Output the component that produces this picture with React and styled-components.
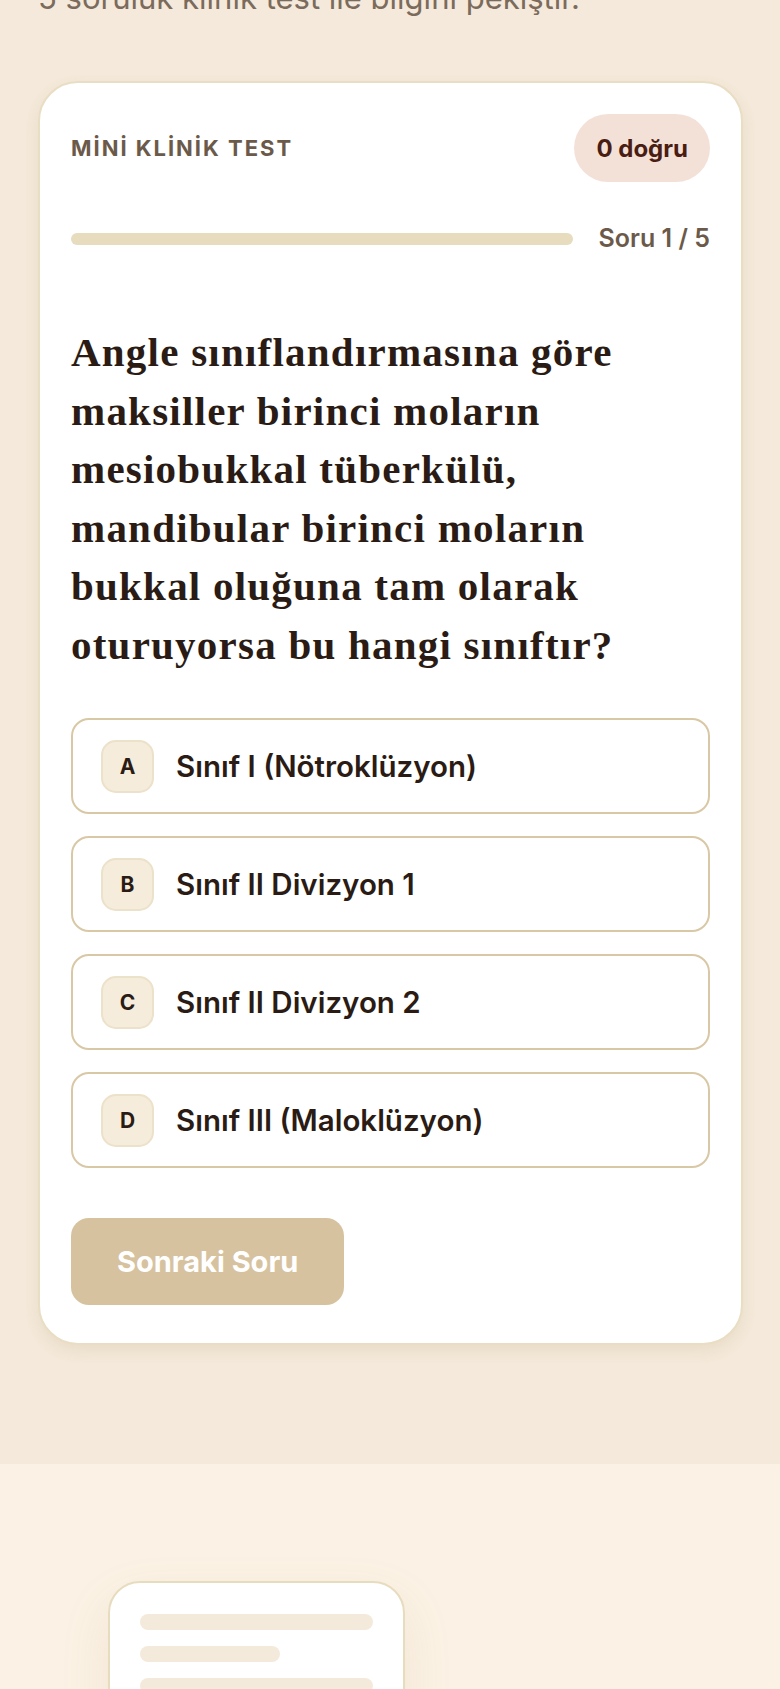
import React from "react";
import styled, { createGlobalStyle } from "styled-components";

const GlobalStyle = createGlobalStyle`
  html, body { margin: 0; padding: 0; }
  body {
    background: #f4e9da;
    font-family: Inter, "Noto Sans", sans-serif;
    -webkit-font-smoothing: antialiased;
  }
`;

const Page = styled.div`
  width: 780px;
  overflow: hidden;
`;

const TopSection = styled.section`
  background: #f4e9da;
  padding: 0 37px 119px 38px;
`;

const Subtitle = styled.p`
  margin: -25px 0 0;
  font-size: 31px;
  line-height: 46px;
  color: #7b6b5c;
  font-weight: 400;
`;

const Card = styled.div`
  margin-top: 60px;
  background: #ffffff;
  border: 2px solid #e9dec3;
  border-radius: 40px;
  padding: 31px 31px 38px;
  box-shadow: 0 6px 14px rgba(170, 140, 90, 0.14);
`;

const HeaderRow = styled.div`
  display: flex;
  align-items: center;
  justify-content: space-between;
`;

const Eyebrow = styled.span`
  font-size: 22px;
  font-weight: 700;
  letter-spacing: 0.09em;
  color: #6b5a4a;
`;

const ScoreBadge = styled.span`
  display: inline-flex;
  align-items: center;
  height: 68px;
  padding: 0 22px;
  border-radius: 34px;
  background: #f3e1d8;
  color: #4a1d13;
  font-size: 24px;
  font-weight: 700;
`;

const ProgressRow = styled.div`
  margin-top: 40px;
  display: flex;
  align-items: center;
  gap: 26px;
`;

const Track = styled.div`
  flex: 1;
  height: 12px;
  border-radius: 6px;
  background: #e8dcbf;
`;

const Counter = styled.span`
  font-size: 25px;
  line-height: 33px;
  font-weight: 600;
  color: #6b5a4a;
`;

const Question = styled.h2`
  margin: 68px 0 0;
  max-width: 575px;
  font-family: "Liberation Serif", "Times New Roman", serif;
  font-weight: 700;
  font-size: 41px;
  line-height: 58.5px;
  letter-spacing: 0.03em;
  color: #2a1c15;
`;

const Options = styled.div`
  margin-top: 44px;
  display: flex;
  flex-direction: column;
  gap: 22px;
`;

const Option = styled.button`
  display: flex;
  align-items: center;
  gap: 22px;
  height: 96px;
  padding: 0 28px;
  border: 2px solid #d9c8a5;
  border-radius: 18px;
  background: #ffffff;
  text-align: left;
  font-family: inherit;
  cursor: pointer;
`;

const Letter = styled.span`
  flex: none;
  display: flex;
  align-items: center;
  justify-content: center;
  width: 53px;
  height: 53px;
  box-sizing: border-box;
  border: 2px solid #ece1c9;
  border-radius: 15px;
  background: #f5ecdb;
  color: #2a1c15;
  font-size: 21px;
  font-weight: 700;
`;

const OptionText = styled.span`
  font-size: 29.5px;
  font-weight: 600;
  color: #2a1c15;
`;

const NextButton = styled.button`
  margin-top: 50px;
  height: 87px;
  padding: 0 46px;
  border: none;
  border-radius: 18px;
  background: #d7c29f;
  color: #ffffff;
  font-family: inherit;
  font-size: 29px;
  font-weight: 700;
`;

const BottomSection = styled.section`
  background: #fbf2e5;
  padding: 117px 0 40px 108px;
  min-height: 300px;
`;

const MiniCard = styled.div`
  width: 297px;
  box-sizing: border-box;
  background: #ffffff;
  border: 2px solid #e8dcbf;
  border-radius: 32px;
  padding: 31px 30px 40px;
  display: flex;
  flex-direction: column;
  gap: 16px;
  box-shadow: 0 20px 50px rgba(170, 130, 70, 0.12);
`;

const SkeletonLine = styled.div`
  height: 16px;
  border-radius: 8px;
  background: #f4eadb;
  width: ${(p) => p.$w};
`;

const options = [
  { key: "A", text: "Sınıf I (Nötroklüzyon)" },
  { key: "B", text: "Sınıf II Divizyon 1" },
  { key: "C", text: "Sınıf II Divizyon 2" },
  { key: "D", text: "Sınıf III (Maloklüzyon)" },
];

export default function App() {
  return (
    <Page>
      <GlobalStyle />
      <TopSection>
        <Subtitle>5 soruluk klinik test ile bilgini pekiştir.</Subtitle>
        <Card>
          <HeaderRow>
            <Eyebrow>MİNİ KLİNİK TEST</Eyebrow>
            <ScoreBadge>0 doğru</ScoreBadge>
          </HeaderRow>
          <ProgressRow>
            <Track />
            <Counter>Soru 1 / 5</Counter>
          </ProgressRow>
          <Question>
            Angle sınıflandırmasına göre maksiller birinci moların mesiobukkal
            tüberkülü, mandibular birinci moların bukkal oluğuna tam olarak
            oturuyorsa bu hangi sınıftır?
          </Question>
          <Options>
            {options.map((o) => (
              <Option key={o.key} type="button">
                <Letter>{o.key}</Letter>
                <OptionText>{o.text}</OptionText>
              </Option>
            ))}
          </Options>
          <NextButton type="button">Sonraki Soru</NextButton>
        </Card>
      </TopSection>
      <BottomSection>
        <MiniCard>
          <SkeletonLine $w="100%" />
          <SkeletonLine $w="140px" />
          <SkeletonLine $w="100%" />
          <SkeletonLine $w="60%" />
        </MiniCard>
      </BottomSection>
    </Page>
  );
}
